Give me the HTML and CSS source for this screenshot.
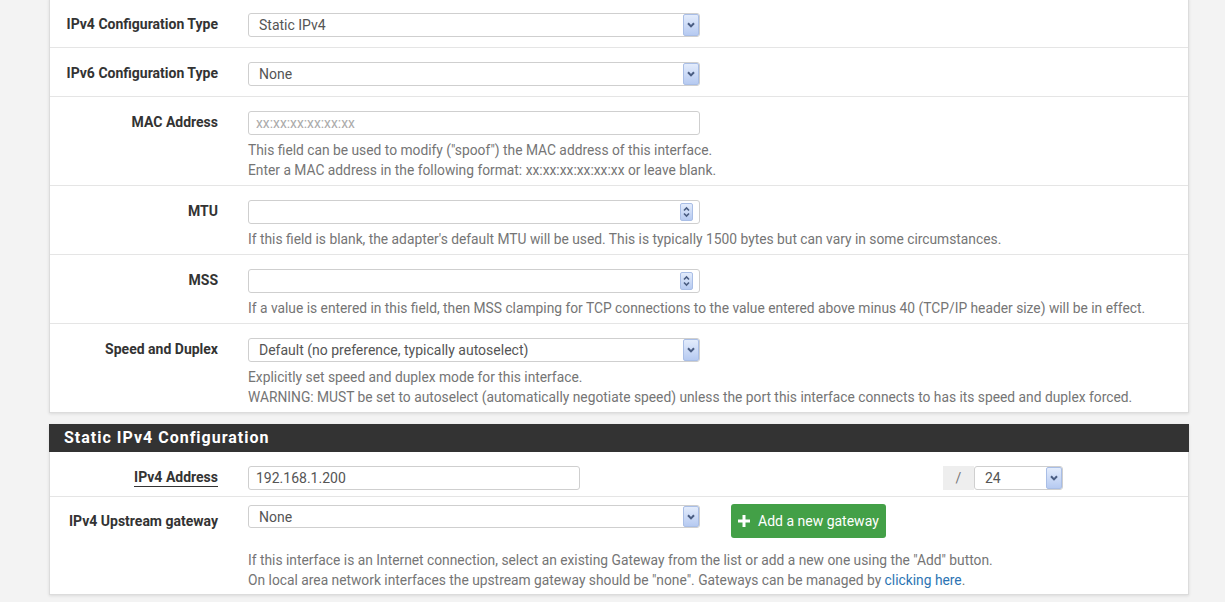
FILE: index.html
```html
<!DOCTYPE html>
<html lang="en">
<head>
  <meta charset="UTF-8">
  <title>Interfaces: WAN</title>
  <link rel="stylesheet" href="styles.css">
</head>
<body>
<div class="page">
  <!--general configuration (top cut off)-->
  <div class="panel first">
    <div class="row">
      <label class="lbl">IPv4 Configuration Type</label>
      <div class="ctl">
        <div class="sel">
          <select><option>Static IPv4</option></select>
          <span class="drop"><svg width="8" height="6" viewBox="0 0 8 6"><path d="M1 1.2 L4 4.4 L7 1.2" fill="none" stroke="#4a5d82" stroke-width="2"/></svg></span>
        </div>
      </div>
    </div>
    <div class="row">
      <label class="lbl">IPv6 Configuration Type</label>
      <div class="ctl">
        <div class="sel">
          <select><option>None</option></select>
          <span class="drop"><svg width="8" height="6" viewBox="0 0 8 6"><path d="M1 1.2 L4 4.4 L7 1.2" fill="none" stroke="#4a5d82" stroke-width="2"/></svg></span>
        </div>
      </div>
    </div>
    <div class="row">
      <label class="lbl">MAC Address</label>
      <div class="ctl">
        <input class="txt wide" type="text" placeholder="xx:xx:xx:xx:xx:xx">
        <div class="help">This field can be used to modify ("spoof") the MAC address of this interface.<br>Enter a MAC address in the following format: xx:xx:xx:xx:xx:xx or leave blank.</div>
      </div>
    </div>
    <div class="row">
      <label class="lbl">MTU</label>
      <div class="ctl">
        <div class="num">
          <input class="txt wide" type="text">
          <span class="spin"><svg width="7" height="12" viewBox="0 0 7 12"><path d="M1 4.5 L3.5 2 L6 4.5 M1 7.5 L3.5 10 L6 7.5" fill="none" stroke="#4a5d82" stroke-width="1.6"/></svg></span>
        </div>
        <div class="help">If this field is blank, the adapter's default MTU will be used. This is typically 1500 bytes but can vary in some circumstances.</div>
      </div>
    </div>
    <div class="row">
      <label class="lbl">MSS</label>
      <div class="ctl">
        <div class="num">
          <input class="txt wide" type="text">
          <span class="spin"><svg width="7" height="12" viewBox="0 0 7 12"><path d="M1 4.5 L3.5 2 L6 4.5 M1 7.5 L3.5 10 L6 7.5" fill="none" stroke="#4a5d82" stroke-width="1.6"/></svg></span>
        </div>
        <div class="help">If a value is entered in this field, then MSS clamping for TCP connections to the value entered above minus 40 (TCP/IP header size) will be in effect.</div>
      </div>
    </div>
    <div class="row">
      <label class="lbl">Speed and Duplex</label>
      <div class="ctl">
        <div class="sel">
          <select><option>Default (no preference, typically autoselect)</option></select>
          <span class="drop"><svg width="8" height="6" viewBox="0 0 8 6"><path d="M1 1.2 L4 4.4 L7 1.2" fill="none" stroke="#4a5d82" stroke-width="2"/></svg></span>
        </div>
        <div class="help">Explicitly set speed and duplex mode for this interface.<br>WARNING: MUST be set to autoselect (automatically negotiate speed) unless the port this interface connects to has its speed and duplex forced.</div>
      </div>
    </div>
  </div>

  <!--static ipv4-->
  <div class="panel">
    <div class="panel-head">Static IPv4 Configuration</div>
    <div class="row addr">
      <label class="lbl"><span class="req">IPv4 Address</span></label>
      <div class="ctl line">
        <input class="txt short" type="text" value="192.168.1.200">
        <div class="mask">
          <span class="addon">/</span>
          <div class="sel small">
            <select><option>24</option></select>
            <span class="drop"><svg width="8" height="6" viewBox="0 0 8 6"><path d="M1 1.2 L4 4.4 L7 1.2" fill="none" stroke="#4a5d82" stroke-width="2"/></svg></span>
          </div>
        </div>
      </div>
    </div>
    <div class="row gw">
      <label class="lbl">IPv4 Upstream gateway</label>
      <div class="ctl">
        <div class="line">
          <div class="sel">
            <select><option>None</option></select>
            <span class="drop"><svg width="8" height="6" viewBox="0 0 8 6"><path d="M1 1.2 L4 4.4 L7 1.2" fill="none" stroke="#4a5d82" stroke-width="2"/></svg></span>
          </div>
          <button class="btn-add"><svg width="12" height="12" viewBox="0 0 12 12"><path d="M4.5 0h3v4.5H12v3H7.5V12h-3V7.5H0v-3h4.5z" fill="#fff"/></svg>Add a new gateway</button>
        </div>
        <div class="help">If this interface is an Internet connection, select an existing Gateway from the list or add a new one using the "Add" button.<br>On local area network interfaces the upstream gateway should be "none". Gateways can be managed by <a href="#">clicking here</a>.</div>
      </div>
    </div>
  </div>
</div>
</body>
</html>
```

FILE: styles.css
```css
*{box-sizing:border-box;}
body{
  margin:0;
  background:#f3f3f3;
  font-family:Roboto,"Liberation Sans",sans-serif;
  font-size:14px;
  color:#333;
}
.page{padding-left:49px;}

.panel{
  width:1140px;
  background:#fff;
  border:1px solid #dcdcdc;
  box-shadow:0 1px 3px rgba(0,0,0,0.1);
  margin-bottom:11px;
}
.panel.first{margin-top:-2px;}
.panel-head{
  background:#333;
  color:#fff;
  height:28px;
  line-height:28px;
  padding:0 15px;
  margin:-1px -1px 0;
  font-size:16px;
  font-weight:700;
  letter-spacing:1px;
}

/*form rows*/
.row{
  display:grid;
  grid-template-columns:183px 1fr;
  border-top:1px solid #e5e5e5;
  padding:14px 0 10px;
}
.row:first-child{border-top:0;}
.lbl{
  padding-right:15px;
  text-align:right;
  font-weight:700;
  line-height:23px;
}
.ctl{padding-left:15px;}
.line{display:flex;align-items:flex-start;}

.sel{position:relative;width:452px;height:24px;}
.sel select{
  appearance:none;
  -webkit-appearance:none;
  width:100%; height:100%;
  border:1px solid #cfcfcf;
  border-radius:3px;
  background:#fff;
  font:inherit;
  color:#555;
  padding:0 0 0 10px;
  outline:none;
}
.drop{
  position:absolute;
  right:1px; top:1px; bottom:1px;
  width:16px;
  border:1px solid #a9bee6;
  border-radius:2px;
  background:linear-gradient(#e3ecfc,#b6caf1);
  display:flex;
  align-items:center;
  justify-content:center;
}

.txt{
  height:24px;
  border:1px solid #cfcfcf;
  border-radius:3px;
  font:inherit;
  color:#555;
  padding:0 7px;
  outline:none;
}
.txt::placeholder{color:#aaa;font-size:13.8px;}
.wide{width:452px;}
.short{width:332px;}

.num{position:relative;width:452px;}
.spin{
  position:absolute;
  right:7px; top:3px;
  width:13px; height:18px;
  border:1px solid #a9bee6;
  border-radius:2px;
  background:linear-gradient(#e3ecfc,#b6caf1);
  display:flex;
  align-items:center;
  justify-content:center;
}

.help{
  color:#757575;
  font-size:13.8px;
  line-height:20px;
  margin:5px 0 -5px;
}
.help a{color:#2c74b3;text-decoration:none;}

/*static ipv4*/
.row.addr{border-top:0;padding:14px 0 6px;}
.req{border-bottom:1px solid #333;padding-bottom:1px;}
.mask{display:flex;margin-left:363px;}
.addon{
  width:31px; height:24px;
  line-height:24px;
  background:#eee;
  color:#777;
  text-align:center;
}
.sel.small{width:89px;}

.row.gw{padding:7px 0 4px;}
.gw .lbl{line-height:34px;}
.gw .sel{margin-top:1px;height:23px;}
.btn-add{
  margin-left:31px;
  height:34px;
  padding:0 7px;
  background:#43a047;
  border:0;
  border-radius:3px;
  color:#fff;
  font:inherit;
  font-size:14px;
  display:flex;
  align-items:center;
  gap:8px;
}
.gw .help{margin:12px 0 0;}
```
